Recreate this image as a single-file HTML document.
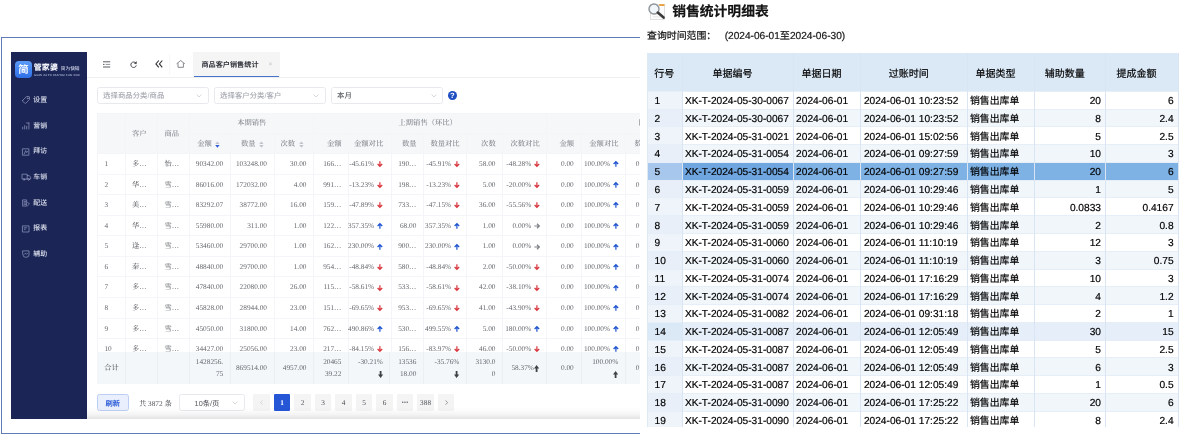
<!DOCTYPE html>
<html lang="zh-CN"><head><meta charset="utf-8"><title>销售统计明细表</title>
<style>
html,body{margin:0;padding:0;background:#fff;}
body{width:1187px;height:438px;position:relative;overflow:hidden;font-family:"Liberation Sans","Noto Sans CJK SC",sans-serif;}
div{position:absolute;box-sizing:border-box;white-space:nowrap;}
svg{position:absolute;overflow:visible;}
#L{text-rendering:geometricPrecision;font-family:"Liberation Serif","Noto Serif CJK SC",serif;font-size:7.3px;font-weight:500;color:#65686e;}
.sans{font-family:"Liberation Sans","Noto Sans CJK SC",sans-serif;}
.hd{color:#8b8e94;font-weight:600;}
.menu{font-family:"Liberation Sans","Noto Sans CJK SC",sans-serif;font-weight:500;font-size:6.9px;color:#dde1ee;}
#R{-webkit-text-stroke:0.18px #000;text-rendering:geometricPrecision;font-family:"Liberation Sans","Noto Sans CJK SC",sans-serif;font-size:10.18px;color:#000;}
.vl{background:#f3f5f8;width:1px;}
.hl{background:#f3f5f8;height:1px;}
.rvl{background:#d9e5f2;width:1px;}
.rhl{background:#e6eef7;height:1px;}
</style></head><body>

<div style="left:11px;top:52px;width:76px;height:367px;background:#1b2556;"></div>
<div id="L" style="left:0;top:0;width:640px;height:438px;overflow:hidden;filter:blur(0.42px);">
<div style="left:1px;top:37px;width:645px;height:397px;border:1px solid #5f7cb6;border-right:none;"></div>
<div style="left:15px;top:61.4px;width:17px;height:17px;border-radius:4px;background:linear-gradient(180deg,#5b9bf8,#2f6fe6);"></div>
<div class="sans" style="left:15px;top:63.9px;width:17px;height:14px;line-height:14px;text-align:center;color:#f4f8ff;font-weight:bold;font-size:10.4px;">简</div>
<div class="sans" style="left:33.7px;top:61.9px;width:30px;height:12px;line-height:12px;text-align:left;color:#f2f4fa;font-weight:900;font-size:7.9px;letter-spacing:0.25px;">管家婆</div>
<div class="sans" style="left:60.8px;top:63.3px;width:24px;height:12px;line-height:12px;text-align:left;color:#d5daec;font-size:4.7px;font-weight:500;">简为快销</div>
<div class="sans" style="left:34px;top:73.9px;width:50px;height:4px;line-height:4px;text-align:left;color:#b9c0dc;font-size:2.75px;letter-spacing:0.05px;">GUAN JIA PO JIAN WEI KUAI XIAO</div>
<svg style="left:21.6px;top:96.3px" width="9" height="8" viewBox="0 0 9 8" fill="none" stroke="#959dc2" stroke-width="0.7" stroke-linecap="round" stroke-linejoin="round"><path d="M0.7 4.3 L4.2 0.8 Q4.5 0.5 5 0.5 H6.9 Q7.5 0.5 7.5 1.1 V3 Q7.5 3.5 7.2 3.8 L3.7 7.3 Q3.2 7.7 2.7 7.2 L0.7 5.2 Q0.3 4.7 0.7 4.3 Z"/><circle cx="5.7" cy="2.3" r="0.45"/></svg>
<div class="menu" style="left:33.3px;top:94.95px;width:30px;height:12px;line-height:12px;text-align:left;">设置</div>
<svg style="left:21.6px;top:121.97px" width="9" height="8" viewBox="0 0 9 8" fill="none" stroke="#959dc2" stroke-width="0.7" stroke-linecap="round" stroke-linejoin="round"><path d="M0.7 7 V5.2 M2.7 7 V3.6 M4.7 7 V4.4 M6.9 7 V1 M4.6 1 H6.9"/></svg>
<div class="menu" style="left:33.3px;top:120.62px;width:30px;height:12px;line-height:12px;text-align:left;">营销</div>
<svg style="left:21.6px;top:147.64px" width="9" height="8" viewBox="0 0 9 8" fill="none" stroke="#959dc2" stroke-width="0.7" stroke-linecap="round" stroke-linejoin="round"><path d="M0.8 0.8 H6.9 V7.2 H0.8 Z M2.2 5.9 L3.7 2.6 L4.7 4.6 L5.9 3.2"/></svg>
<div class="menu" style="left:33.3px;top:146.29px;width:30px;height:12px;line-height:12px;text-align:left;">拜访</div>
<svg style="left:21.6px;top:173.31px" width="9" height="8" viewBox="0 0 9 8" fill="none" stroke="#959dc2" stroke-width="0.7" stroke-linecap="round" stroke-linejoin="round"><path d="M0.4 1.2 H5.2 V6 H0.4 Z M5.2 2.6 H7.3 L8.6 4.2 V6 H5.2"/><circle cx="2.1" cy="6.5" r="0.75" fill="#1b2556"/><circle cx="6.6" cy="6.5" r="0.75" fill="#1b2556"/></svg>
<div class="menu" style="left:33.3px;top:171.96px;width:30px;height:12px;line-height:12px;text-align:left;">车销</div>
<svg style="left:21.6px;top:198.98px" width="9" height="8" viewBox="0 0 9 8" fill="none" stroke="#959dc2" stroke-width="0.7" stroke-linecap="round" stroke-linejoin="round"><path d="M1 0.9 H4.6 V7.1 H1 Z M2 2.6 H3.6 M2 4 H3.6 M2 5.4 H3.6 M5.6 3.2 L7.4 5 L5.6 6.8"/></svg>
<div class="menu" style="left:33.3px;top:197.63px;width:30px;height:12px;line-height:12px;text-align:left;">配送</div>
<svg style="left:21.6px;top:224.65px" width="9" height="8" viewBox="0 0 9 8" fill="none" stroke="#959dc2" stroke-width="0.7" stroke-linecap="round" stroke-linejoin="round"><path d="M0.8 0.9 H7 V7 H0.8 Z M2.2 2.8 H4.6 M2.2 4.3 H3.4"/></svg>
<div class="menu" style="left:33.3px;top:223.3px;width:30px;height:12px;line-height:12px;text-align:left;">报表</div>
<svg style="left:21.6px;top:250.32px" width="9" height="8" viewBox="0 0 9 8" fill="none" stroke="#959dc2" stroke-width="0.7" stroke-linecap="round" stroke-linejoin="round"><path d="M0.9 0.9 H7 V5 Q7 7.3 3.95 7.3 Q0.9 7.3 0.9 5 Z M2.3 4.3 L3.4 3.2 L4.5 4.3 L5.6 3.2"/></svg>
<div class="menu" style="left:33.3px;top:248.97px;width:30px;height:12px;line-height:12px;text-align:left;">辅助</div>
<div style="left:87px;top:52px;width:553px;height:26px;background:#fff;border-bottom:1px solid #efefef;"></div>
<svg style="left:102.6px;top:60.5px" width="8" height="7" viewBox="0 0 8 7" fill="none" stroke="#3c3f45" stroke-width="0.85"><path d="M0 0.8 H7.2 M0 6 H7.2 M0 3.4 H1.5"/><path d="M2.6 3.4 H7.2" stroke="#7c7f85"/></svg>
<svg style="left:130.2px;top:60.8px" width="8" height="8" viewBox="0 0 8 8" fill="none" stroke="#33363b" stroke-width="0.9"><path d="M5.9 2.2 A2.75 2.75 0 1 0 6.3 4.4"/><path d="M6.5 0.5 V2.7 H4.3 Z" fill="#33363b" stroke-width="0.3"/></svg>
<svg style="left:155px;top:60px" width="8" height="8" viewBox="0 0 8 8" fill="none" stroke="#2f3237" stroke-width="1.1"><path d="M3.8 0.5 L0.9 3.9 L3.8 7.3 M7.3 0.5 L4.4 3.9 L7.3 7.3"/></svg>
<div style="left:169px;top:54px;width:1px;height:21px;background:#f7f7f7;"></div>
<svg style="left:176.4px;top:59.9px" width="10" height="8" viewBox="0 0 10 8" fill="none" stroke="#55585e" stroke-width="0.7" stroke-linejoin="round"><path d="M0.6 3.8 L4.7 0.5 L8.8 3.8 M2 3.2 V7.3 H7.4 V3.2"/></svg>
<div style="left:193.2px;top:52px;width:86.5px;height:25px;background:#f5f5f6;"></div>
<div style="left:193.6px;top:75.5px;width:85.8px;height:1.4px;background:#4673cd;"></div>
<div class="sans" style="left:201.4px;top:59.1px;width:70px;height:12px;line-height:12px;text-align:left;color:#2f3238;font-weight:bold;font-size:7.15px;">商品客户销售统计</div>
<div class="sans" style="left:268.6px;top:59.2px;width:6px;height:12px;line-height:12px;text-align:left;color:#c2c5cb;font-size:6.6px;">×</div>
<div style="left:97.3px;top:87.3px;width:111.3px;height:16.5px;border:1px solid #e7e9ed;border-radius:2.5px;background:#fff;"></div>
<div class="sans" style="left:103.1px;top:90.45px;width:111.3px;height:12px;line-height:12px;text-align:left;color:#a6a9b0;font-size:7.4px;">选择商品分类/商品</div>
<svg style="left:196.2px;top:94.15px" width="6" height="4" viewBox="0 0 6 4" fill="none" stroke="#c3c6cd" stroke-width="0.7"><path d="M0.6 0.5 L3 3 L5.4 0.5"/></svg>
<div style="left:214.3px;top:87.3px;width:111.3px;height:16.5px;border:1px solid #e7e9ed;border-radius:2.5px;background:#fff;"></div>
<div class="sans" style="left:220.1px;top:90.45px;width:111.3px;height:12px;line-height:12px;text-align:left;color:#a6a9b0;font-size:7.4px;">选择客户分类/客户</div>
<svg style="left:313.2px;top:94.15px" width="6" height="4" viewBox="0 0 6 4" fill="none" stroke="#c3c6cd" stroke-width="0.7"><path d="M0.6 0.5 L3 3 L5.4 0.5"/></svg>
<div style="left:331.2px;top:87.3px;width:112.2px;height:16.5px;border:1px solid #e7e9ed;border-radius:2.5px;background:#fff;"></div>
<div class="sans" style="left:337px;top:90.45px;width:112.2px;height:12px;line-height:12px;text-align:left;color:#5a5d63;font-size:7.4px;">本月</div>
<svg style="left:431px;top:94.15px" width="6" height="4" viewBox="0 0 6 4" fill="none" stroke="#c3c6cd" stroke-width="0.7"><path d="M0.6 0.5 L3 3 L5.4 0.5"/></svg>
<div style="left:447.7px;top:90.8px;width:9.2px;height:9.2px;border-radius:50%;background:#1f4dc2;"></div>
<div class="sans" style="left:447.7px;top:90.1px;width:9.2px;height:12px;line-height:12px;text-align:center;color:#fff;font-weight:bold;font-size:7.6px;">?</div>
<div style="left:97.2px;top:112.7px;width:560px;height:40.9px;background:#f5f7f9;"></div>
<div class="hl" style="left:97.2px;top:173.65px;width:560px;height:1px;"></div>
<div class="hl" style="left:97.2px;top:194.2px;width:560px;height:1px;"></div>
<div class="hl" style="left:97.2px;top:214.75px;width:560px;height:1px;"></div>
<div class="hl" style="left:97.2px;top:235.3px;width:560px;height:1px;"></div>
<div class="hl" style="left:97.2px;top:255.85px;width:560px;height:1px;"></div>
<div class="hl" style="left:97.2px;top:276.4px;width:560px;height:1px;"></div>
<div class="hl" style="left:97.2px;top:296.95px;width:560px;height:1px;"></div>
<div class="hl" style="left:97.2px;top:317.5px;width:560px;height:1px;"></div>
<div class="hl" style="left:97.2px;top:338.05px;width:560px;height:1px;"></div>
<div class="hl" style="left:97.2px;top:112.7px;width:560px;height:1px;"></div>
<div class="hl" style="left:97.2px;top:153.1px;width:560px;height:1px;"></div>
<div class="hl" style="left:189.8px;top:132.8px;width:500px;height:1px;"></div>
<div class="vl" style="left:96.7px;top:112.7px;width:1px;height:239.5px;"></div>
<div class="vl" style="left:124.6px;top:112.7px;width:1px;height:239.5px;"></div>
<div class="vl" style="left:157.1px;top:112.7px;width:1px;height:239.5px;"></div>
<div class="vl" style="left:189.3px;top:112.7px;width:1px;height:239.5px;"></div>
<div class="vl" style="left:229.9px;top:133.3px;width:1px;height:218.9px;"></div>
<div class="vl" style="left:273.7px;top:133.3px;width:1px;height:218.9px;"></div>
<div class="vl" style="left:313.2px;top:112.7px;width:1px;height:239.5px;"></div>
<div class="vl" style="left:348.1px;top:133.3px;width:1px;height:218.9px;"></div>
<div class="vl" style="left:390.5px;top:133.3px;width:1px;height:218.9px;"></div>
<div class="vl" style="left:423.1px;top:133.3px;width:1px;height:218.9px;"></div>
<div class="vl" style="left:466.1px;top:133.3px;width:1px;height:218.9px;"></div>
<div class="vl" style="left:502.2px;top:133.3px;width:1px;height:218.9px;"></div>
<div class="vl" style="left:546.2px;top:112.7px;width:1px;height:239.5px;"></div>
<div class="vl" style="left:580.5px;top:133.3px;width:1px;height:218.9px;"></div>
<div class="vl" style="left:625px;top:133.3px;width:1px;height:218.9px;"></div>
<div class="hd" style="left:132px;top:127.85px;width:30px;height:12px;line-height:12px;text-align:left;">客户</div>
<div class="hd" style="left:164.5px;top:127.85px;width:30px;height:12px;line-height:12px;text-align:left;">商品</div>
<div class="hd" style="left:189.8px;top:117px;width:123.9px;height:12px;line-height:12px;text-align:center;">本期销售</div>
<div class="hd" style="left:313.7px;top:117px;width:233px;height:12px;line-height:12px;text-align:center;text-indent:-5px;">上期销售（环比）</div>
<div class="hd" style="left:638.6px;top:117px;width:40px;height:12px;line-height:12px;text-align:left;">同期销售（同比）</div>
<div class="hd" style="left:189.8px;top:138.05px;width:22px;height:12px;line-height:12px;text-align:right;">金额</div>
<svg style="left:215.4px;top:141.05px" width="4.8" height="7" viewBox="0 0 4.8 7"><path d="M2.4 0.4 L4.6 3 H0.2 Z" fill="#c0c4cc"/><path d="M2.4 6.8 L4.6 4.1 H0.2 Z" fill="#2b5bd7"/></svg>
<div class="hd" style="left:230.4px;top:138.05px;width:25.2px;height:12px;line-height:12px;text-align:right;">数量</div>
<svg style="left:259.2px;top:141.05px" width="4.8" height="7" viewBox="0 0 4.8 7"><path d="M2.4 0.4 L4.6 3 H0.2 Z" fill="#c0c4cc"/><path d="M2.4 6.8 L4.6 4.1 H0.2 Z" fill="#c0c4cc"/></svg>
<div class="hd" style="left:274.2px;top:138.05px;width:20.9px;height:12px;line-height:12px;text-align:right;">次数</div>
<svg style="left:298.7px;top:141.05px" width="4.8" height="7" viewBox="0 0 4.8 7"><path d="M2.4 0.4 L4.6 3 H0.2 Z" fill="#c0c4cc"/><path d="M2.4 6.8 L4.6 4.1 H0.2 Z" fill="#c0c4cc"/></svg>
<div class="hd" style="left:313.7px;top:138.05px;width:27.9px;height:12px;line-height:12px;text-align:right;">金额</div>
<div class="hd" style="left:348.6px;top:138.05px;width:34.6px;height:12px;line-height:12px;text-align:right;">金额对比</div>
<div class="hd" style="left:391px;top:138.05px;width:25.6px;height:12px;line-height:12px;text-align:right;">数量</div>
<div class="hd" style="left:423.6px;top:138.05px;width:36px;height:12px;line-height:12px;text-align:right;">数量对比</div>
<div class="hd" style="left:466.6px;top:138.05px;width:29.1px;height:12px;line-height:12px;text-align:right;">次数</div>
<div class="hd" style="left:502.7px;top:138.05px;width:37px;height:12px;line-height:12px;text-align:right;">次数对比</div>
<div class="hd" style="left:546.7px;top:138.05px;width:27.3px;height:12px;line-height:12px;text-align:right;">金额</div>
<div class="hd" style="left:581px;top:138.05px;width:37.5px;height:12px;line-height:12px;text-align:right;">金额对比</div>
<div class="hd" style="left:634.6px;top:138.05px;width:30px;height:12px;line-height:12px;text-align:left;">数量</div>
<div style="left:0;top:153.6px;width:640px;height:198.6px;overflow:hidden;">
<div style="left:104.4px;top:4.58px;width:20px;height:12px;line-height:12px;text-align:left;">1</div>
<div style="left:132px;top:4.58px;width:30px;height:12px;line-height:12px;text-align:left;">多…</div>
<div style="left:164.5px;top:4.58px;width:30px;height:12px;line-height:12px;text-align:left;">怡…</div>
<div style="left:189.8px;top:4.58px;width:33.4px;height:12px;line-height:12px;text-align:right;">90342.00</div>
<div style="left:230.4px;top:4.58px;width:36.6px;height:12px;line-height:12px;text-align:right;">103248.00</div>
<div style="left:274.2px;top:4.58px;width:32.3px;height:12px;line-height:12px;text-align:right;">30.00</div>
<div style="left:313.7px;top:4.58px;width:27.7px;height:12px;line-height:12px;text-align:right;">166…</div>
<svg style="left:376.6px;top:7.78px" width="5.8" height="6" viewBox="0 0 5.8 6" fill="none" stroke="#d9363e" stroke-width="1.25"><path d="M2.9 0.3 V5.2 M0.6 3 L2.9 5.3 L5.2 3"/></svg>
<div style="left:338.6px;top:4.58px;width:35.6px;height:12px;line-height:12px;text-align:right;">-45.61%</div>
<div style="left:391px;top:4.58px;width:25.4px;height:12px;line-height:12px;text-align:right;">190…</div>
<svg style="left:453.6px;top:7.78px" width="5.8" height="6" viewBox="0 0 5.8 6" fill="none" stroke="#d9363e" stroke-width="1.25"><path d="M2.9 0.3 V5.2 M0.6 3 L2.9 5.3 L5.2 3"/></svg>
<div style="left:413.6px;top:4.58px;width:37.6px;height:12px;line-height:12px;text-align:right;">-45.91%</div>
<div style="left:466.6px;top:4.58px;width:28.9px;height:12px;line-height:12px;text-align:right;">58.00</div>
<svg style="left:533.7px;top:7.78px" width="5.8" height="6" viewBox="0 0 5.8 6" fill="none" stroke="#d9363e" stroke-width="1.25"><path d="M2.9 0.3 V5.2 M0.6 3 L2.9 5.3 L5.2 3"/></svg>
<div style="left:492.7px;top:4.58px;width:38.6px;height:12px;line-height:12px;text-align:right;">-48.28%</div>
<div style="left:546.7px;top:4.58px;width:27.1px;height:12px;line-height:12px;text-align:right;">0.00</div>
<svg style="left:612.5px;top:7.78px" width="5.8" height="6" viewBox="0 0 5.8 6" fill="none" stroke="#1f55d0" stroke-width="1.25"><path d="M2.9 5.7 V0.8 M0.6 3 L2.9 0.7 L5.2 3"/></svg>
<div style="left:571px;top:4.58px;width:39.1px;height:12px;line-height:12px;text-align:right;">100.00%</div>
<div style="left:635.8px;top:4.58px;width:10px;height:12px;line-height:12px;text-align:left;">0</div>
<div style="left:104.4px;top:25.13px;width:20px;height:12px;line-height:12px;text-align:left;">2</div>
<div style="left:132px;top:25.13px;width:30px;height:12px;line-height:12px;text-align:left;">华…</div>
<div style="left:164.5px;top:25.13px;width:30px;height:12px;line-height:12px;text-align:left;">雪…</div>
<div style="left:189.8px;top:25.13px;width:33.4px;height:12px;line-height:12px;text-align:right;">86016.00</div>
<div style="left:230.4px;top:25.13px;width:36.6px;height:12px;line-height:12px;text-align:right;">172032.00</div>
<div style="left:274.2px;top:25.13px;width:32.3px;height:12px;line-height:12px;text-align:right;">4.00</div>
<div style="left:313.7px;top:25.13px;width:27.7px;height:12px;line-height:12px;text-align:right;">991…</div>
<svg style="left:376.6px;top:28.33px" width="5.8" height="6" viewBox="0 0 5.8 6" fill="none" stroke="#d9363e" stroke-width="1.25"><path d="M2.9 0.3 V5.2 M0.6 3 L2.9 5.3 L5.2 3"/></svg>
<div style="left:338.6px;top:25.13px;width:35.6px;height:12px;line-height:12px;text-align:right;">-13.23%</div>
<div style="left:391px;top:25.13px;width:25.4px;height:12px;line-height:12px;text-align:right;">198…</div>
<svg style="left:453.6px;top:28.33px" width="5.8" height="6" viewBox="0 0 5.8 6" fill="none" stroke="#d9363e" stroke-width="1.25"><path d="M2.9 0.3 V5.2 M0.6 3 L2.9 5.3 L5.2 3"/></svg>
<div style="left:413.6px;top:25.13px;width:37.6px;height:12px;line-height:12px;text-align:right;">-13.23%</div>
<div style="left:466.6px;top:25.13px;width:28.9px;height:12px;line-height:12px;text-align:right;">5.00</div>
<svg style="left:533.7px;top:28.33px" width="5.8" height="6" viewBox="0 0 5.8 6" fill="none" stroke="#d9363e" stroke-width="1.25"><path d="M2.9 0.3 V5.2 M0.6 3 L2.9 5.3 L5.2 3"/></svg>
<div style="left:492.7px;top:25.13px;width:38.6px;height:12px;line-height:12px;text-align:right;">-20.00%</div>
<div style="left:546.7px;top:25.13px;width:27.1px;height:12px;line-height:12px;text-align:right;">0.00</div>
<svg style="left:612.5px;top:28.33px" width="5.8" height="6" viewBox="0 0 5.8 6" fill="none" stroke="#1f55d0" stroke-width="1.25"><path d="M2.9 5.7 V0.8 M0.6 3 L2.9 0.7 L5.2 3"/></svg>
<div style="left:571px;top:25.13px;width:39.1px;height:12px;line-height:12px;text-align:right;">100.00%</div>
<div style="left:635.8px;top:25.13px;width:10px;height:12px;line-height:12px;text-align:left;">0</div>
<div style="left:104.4px;top:45.67px;width:20px;height:12px;line-height:12px;text-align:left;">3</div>
<div style="left:132px;top:45.67px;width:30px;height:12px;line-height:12px;text-align:left;">美…</div>
<div style="left:164.5px;top:45.67px;width:30px;height:12px;line-height:12px;text-align:left;">雪…</div>
<div style="left:189.8px;top:45.67px;width:33.4px;height:12px;line-height:12px;text-align:right;">83292.07</div>
<div style="left:230.4px;top:45.67px;width:36.6px;height:12px;line-height:12px;text-align:right;">38772.00</div>
<div style="left:274.2px;top:45.67px;width:32.3px;height:12px;line-height:12px;text-align:right;">16.00</div>
<div style="left:313.7px;top:45.67px;width:27.7px;height:12px;line-height:12px;text-align:right;">159…</div>
<svg style="left:376.6px;top:48.88px" width="5.8" height="6" viewBox="0 0 5.8 6" fill="none" stroke="#d9363e" stroke-width="1.25"><path d="M2.9 0.3 V5.2 M0.6 3 L2.9 5.3 L5.2 3"/></svg>
<div style="left:338.6px;top:45.67px;width:35.6px;height:12px;line-height:12px;text-align:right;">-47.89%</div>
<div style="left:391px;top:45.67px;width:25.4px;height:12px;line-height:12px;text-align:right;">733…</div>
<svg style="left:453.6px;top:48.88px" width="5.8" height="6" viewBox="0 0 5.8 6" fill="none" stroke="#d9363e" stroke-width="1.25"><path d="M2.9 0.3 V5.2 M0.6 3 L2.9 5.3 L5.2 3"/></svg>
<div style="left:413.6px;top:45.67px;width:37.6px;height:12px;line-height:12px;text-align:right;">-47.15%</div>
<div style="left:466.6px;top:45.67px;width:28.9px;height:12px;line-height:12px;text-align:right;">36.00</div>
<svg style="left:533.7px;top:48.88px" width="5.8" height="6" viewBox="0 0 5.8 6" fill="none" stroke="#d9363e" stroke-width="1.25"><path d="M2.9 0.3 V5.2 M0.6 3 L2.9 5.3 L5.2 3"/></svg>
<div style="left:492.7px;top:45.67px;width:38.6px;height:12px;line-height:12px;text-align:right;">-55.56%</div>
<div style="left:546.7px;top:45.67px;width:27.1px;height:12px;line-height:12px;text-align:right;">0.00</div>
<svg style="left:612.5px;top:48.88px" width="5.8" height="6" viewBox="0 0 5.8 6" fill="none" stroke="#1f55d0" stroke-width="1.25"><path d="M2.9 5.7 V0.8 M0.6 3 L2.9 0.7 L5.2 3"/></svg>
<div style="left:571px;top:45.67px;width:39.1px;height:12px;line-height:12px;text-align:right;">100.00%</div>
<div style="left:635.8px;top:45.67px;width:10px;height:12px;line-height:12px;text-align:left;">0</div>
<div style="left:104.4px;top:66.23px;width:20px;height:12px;line-height:12px;text-align:left;">4</div>
<div style="left:132px;top:66.23px;width:30px;height:12px;line-height:12px;text-align:left;">华…</div>
<div style="left:164.5px;top:66.23px;width:30px;height:12px;line-height:12px;text-align:left;">雪…</div>
<div style="left:189.8px;top:66.23px;width:33.4px;height:12px;line-height:12px;text-align:right;">55980.00</div>
<div style="left:230.4px;top:66.23px;width:36.6px;height:12px;line-height:12px;text-align:right;">311.00</div>
<div style="left:274.2px;top:66.23px;width:32.3px;height:12px;line-height:12px;text-align:right;">1.00</div>
<div style="left:313.7px;top:66.23px;width:27.7px;height:12px;line-height:12px;text-align:right;">122…</div>
<svg style="left:376.6px;top:69.43px" width="5.8" height="6" viewBox="0 0 5.8 6" fill="none" stroke="#1f55d0" stroke-width="1.25"><path d="M2.9 5.7 V0.8 M0.6 3 L2.9 0.7 L5.2 3"/></svg>
<div style="left:338.6px;top:66.23px;width:35.6px;height:12px;line-height:12px;text-align:right;">357.35%</div>
<div style="left:391px;top:66.23px;width:25.4px;height:12px;line-height:12px;text-align:right;">68.00</div>
<svg style="left:453.6px;top:69.43px" width="5.8" height="6" viewBox="0 0 5.8 6" fill="none" stroke="#1f55d0" stroke-width="1.25"><path d="M2.9 5.7 V0.8 M0.6 3 L2.9 0.7 L5.2 3"/></svg>
<div style="left:413.6px;top:66.23px;width:37.6px;height:12px;line-height:12px;text-align:right;">357.35%</div>
<div style="left:466.6px;top:66.23px;width:28.9px;height:12px;line-height:12px;text-align:right;">1.00</div>
<svg style="left:533.7px;top:69.43px" width="5.8" height="6" viewBox="0 0 5.8 6" fill="none" stroke="#7d8087" stroke-width="1.25"><path d="M0.4 3 H5.2 M3 0.8 L5.3 3 L3 5.2"/></svg>
<div style="left:492.7px;top:66.23px;width:38.6px;height:12px;line-height:12px;text-align:right;">0.00%</div>
<div style="left:546.7px;top:66.23px;width:27.1px;height:12px;line-height:12px;text-align:right;">0.00</div>
<svg style="left:612.5px;top:69.43px" width="5.8" height="6" viewBox="0 0 5.8 6" fill="none" stroke="#1f55d0" stroke-width="1.25"><path d="M2.9 5.7 V0.8 M0.6 3 L2.9 0.7 L5.2 3"/></svg>
<div style="left:571px;top:66.23px;width:39.1px;height:12px;line-height:12px;text-align:right;">100.00%</div>
<div style="left:635.8px;top:66.23px;width:10px;height:12px;line-height:12px;text-align:left;">0</div>
<div style="left:104.4px;top:86.78px;width:20px;height:12px;line-height:12px;text-align:left;">5</div>
<div style="left:132px;top:86.78px;width:30px;height:12px;line-height:12px;text-align:left;">逢…</div>
<div style="left:164.5px;top:86.78px;width:30px;height:12px;line-height:12px;text-align:left;">雪…</div>
<div style="left:189.8px;top:86.78px;width:33.4px;height:12px;line-height:12px;text-align:right;">53460.00</div>
<div style="left:230.4px;top:86.78px;width:36.6px;height:12px;line-height:12px;text-align:right;">29700.00</div>
<div style="left:274.2px;top:86.78px;width:32.3px;height:12px;line-height:12px;text-align:right;">1.00</div>
<div style="left:313.7px;top:86.78px;width:27.7px;height:12px;line-height:12px;text-align:right;">162…</div>
<svg style="left:376.6px;top:89.98px" width="5.8" height="6" viewBox="0 0 5.8 6" fill="none" stroke="#1f55d0" stroke-width="1.25"><path d="M2.9 5.7 V0.8 M0.6 3 L2.9 0.7 L5.2 3"/></svg>
<div style="left:338.6px;top:86.78px;width:35.6px;height:12px;line-height:12px;text-align:right;">230.00%</div>
<div style="left:391px;top:86.78px;width:25.4px;height:12px;line-height:12px;text-align:right;">900…</div>
<svg style="left:453.6px;top:89.98px" width="5.8" height="6" viewBox="0 0 5.8 6" fill="none" stroke="#1f55d0" stroke-width="1.25"><path d="M2.9 5.7 V0.8 M0.6 3 L2.9 0.7 L5.2 3"/></svg>
<div style="left:413.6px;top:86.78px;width:37.6px;height:12px;line-height:12px;text-align:right;">230.00%</div>
<div style="left:466.6px;top:86.78px;width:28.9px;height:12px;line-height:12px;text-align:right;">1.00</div>
<svg style="left:533.7px;top:89.98px" width="5.8" height="6" viewBox="0 0 5.8 6" fill="none" stroke="#7d8087" stroke-width="1.25"><path d="M0.4 3 H5.2 M3 0.8 L5.3 3 L3 5.2"/></svg>
<div style="left:492.7px;top:86.78px;width:38.6px;height:12px;line-height:12px;text-align:right;">0.00%</div>
<div style="left:546.7px;top:86.78px;width:27.1px;height:12px;line-height:12px;text-align:right;">0.00</div>
<svg style="left:612.5px;top:89.98px" width="5.8" height="6" viewBox="0 0 5.8 6" fill="none" stroke="#1f55d0" stroke-width="1.25"><path d="M2.9 5.7 V0.8 M0.6 3 L2.9 0.7 L5.2 3"/></svg>
<div style="left:571px;top:86.78px;width:39.1px;height:12px;line-height:12px;text-align:right;">100.00%</div>
<div style="left:635.8px;top:86.78px;width:10px;height:12px;line-height:12px;text-align:left;">0</div>
<div style="left:104.4px;top:107.33px;width:20px;height:12px;line-height:12px;text-align:left;">6</div>
<div style="left:132px;top:107.33px;width:30px;height:12px;line-height:12px;text-align:left;">秦…</div>
<div style="left:164.5px;top:107.33px;width:30px;height:12px;line-height:12px;text-align:left;">雪…</div>
<div style="left:189.8px;top:107.33px;width:33.4px;height:12px;line-height:12px;text-align:right;">48840.00</div>
<div style="left:230.4px;top:107.33px;width:36.6px;height:12px;line-height:12px;text-align:right;">29700.00</div>
<div style="left:274.2px;top:107.33px;width:32.3px;height:12px;line-height:12px;text-align:right;">1.00</div>
<div style="left:313.7px;top:107.33px;width:27.7px;height:12px;line-height:12px;text-align:right;">954…</div>
<svg style="left:376.6px;top:110.53px" width="5.8" height="6" viewBox="0 0 5.8 6" fill="none" stroke="#d9363e" stroke-width="1.25"><path d="M2.9 0.3 V5.2 M0.6 3 L2.9 5.3 L5.2 3"/></svg>
<div style="left:338.6px;top:107.33px;width:35.6px;height:12px;line-height:12px;text-align:right;">-48.84%</div>
<div style="left:391px;top:107.33px;width:25.4px;height:12px;line-height:12px;text-align:right;">580…</div>
<svg style="left:453.6px;top:110.53px" width="5.8" height="6" viewBox="0 0 5.8 6" fill="none" stroke="#d9363e" stroke-width="1.25"><path d="M2.9 0.3 V5.2 M0.6 3 L2.9 5.3 L5.2 3"/></svg>
<div style="left:413.6px;top:107.33px;width:37.6px;height:12px;line-height:12px;text-align:right;">-48.84%</div>
<div style="left:466.6px;top:107.33px;width:28.9px;height:12px;line-height:12px;text-align:right;">2.00</div>
<svg style="left:533.7px;top:110.53px" width="5.8" height="6" viewBox="0 0 5.8 6" fill="none" stroke="#d9363e" stroke-width="1.25"><path d="M2.9 0.3 V5.2 M0.6 3 L2.9 5.3 L5.2 3"/></svg>
<div style="left:492.7px;top:107.33px;width:38.6px;height:12px;line-height:12px;text-align:right;">-50.00%</div>
<div style="left:546.7px;top:107.33px;width:27.1px;height:12px;line-height:12px;text-align:right;">0.00</div>
<svg style="left:612.5px;top:110.53px" width="5.8" height="6" viewBox="0 0 5.8 6" fill="none" stroke="#1f55d0" stroke-width="1.25"><path d="M2.9 5.7 V0.8 M0.6 3 L2.9 0.7 L5.2 3"/></svg>
<div style="left:571px;top:107.33px;width:39.1px;height:12px;line-height:12px;text-align:right;">100.00%</div>
<div style="left:635.8px;top:107.33px;width:10px;height:12px;line-height:12px;text-align:left;">0</div>
<div style="left:104.4px;top:127.88px;width:20px;height:12px;line-height:12px;text-align:left;">7</div>
<div style="left:132px;top:127.88px;width:30px;height:12px;line-height:12px;text-align:left;">多…</div>
<div style="left:164.5px;top:127.88px;width:30px;height:12px;line-height:12px;text-align:left;">雪…</div>
<div style="left:189.8px;top:127.88px;width:33.4px;height:12px;line-height:12px;text-align:right;">47840.00</div>
<div style="left:230.4px;top:127.88px;width:36.6px;height:12px;line-height:12px;text-align:right;">22080.00</div>
<div style="left:274.2px;top:127.88px;width:32.3px;height:12px;line-height:12px;text-align:right;">26.00</div>
<div style="left:313.7px;top:127.88px;width:27.7px;height:12px;line-height:12px;text-align:right;">115…</div>
<svg style="left:376.6px;top:131.08px" width="5.8" height="6" viewBox="0 0 5.8 6" fill="none" stroke="#d9363e" stroke-width="1.25"><path d="M2.9 0.3 V5.2 M0.6 3 L2.9 5.3 L5.2 3"/></svg>
<div style="left:338.6px;top:127.88px;width:35.6px;height:12px;line-height:12px;text-align:right;">-58.61%</div>
<div style="left:391px;top:127.88px;width:25.4px;height:12px;line-height:12px;text-align:right;">533…</div>
<svg style="left:453.6px;top:131.08px" width="5.8" height="6" viewBox="0 0 5.8 6" fill="none" stroke="#d9363e" stroke-width="1.25"><path d="M2.9 0.3 V5.2 M0.6 3 L2.9 5.3 L5.2 3"/></svg>
<div style="left:413.6px;top:127.88px;width:37.6px;height:12px;line-height:12px;text-align:right;">-58.61%</div>
<div style="left:466.6px;top:127.88px;width:28.9px;height:12px;line-height:12px;text-align:right;">42.00</div>
<svg style="left:533.7px;top:131.08px" width="5.8" height="6" viewBox="0 0 5.8 6" fill="none" stroke="#d9363e" stroke-width="1.25"><path d="M2.9 0.3 V5.2 M0.6 3 L2.9 5.3 L5.2 3"/></svg>
<div style="left:492.7px;top:127.88px;width:38.6px;height:12px;line-height:12px;text-align:right;">-38.10%</div>
<div style="left:546.7px;top:127.88px;width:27.1px;height:12px;line-height:12px;text-align:right;">0.00</div>
<svg style="left:612.5px;top:131.08px" width="5.8" height="6" viewBox="0 0 5.8 6" fill="none" stroke="#1f55d0" stroke-width="1.25"><path d="M2.9 5.7 V0.8 M0.6 3 L2.9 0.7 L5.2 3"/></svg>
<div style="left:571px;top:127.88px;width:39.1px;height:12px;line-height:12px;text-align:right;">100.00%</div>
<div style="left:635.8px;top:127.88px;width:10px;height:12px;line-height:12px;text-align:left;">0</div>
<div style="left:104.4px;top:148.43px;width:20px;height:12px;line-height:12px;text-align:left;">8</div>
<div style="left:132px;top:148.43px;width:30px;height:12px;line-height:12px;text-align:left;">多…</div>
<div style="left:164.5px;top:148.43px;width:30px;height:12px;line-height:12px;text-align:left;">雪…</div>
<div style="left:189.8px;top:148.43px;width:33.4px;height:12px;line-height:12px;text-align:right;">45828.00</div>
<div style="left:230.4px;top:148.43px;width:36.6px;height:12px;line-height:12px;text-align:right;">28944.00</div>
<div style="left:274.2px;top:148.43px;width:32.3px;height:12px;line-height:12px;text-align:right;">23.00</div>
<div style="left:313.7px;top:148.43px;width:27.7px;height:12px;line-height:12px;text-align:right;">151…</div>
<svg style="left:376.6px;top:151.62px" width="5.8" height="6" viewBox="0 0 5.8 6" fill="none" stroke="#d9363e" stroke-width="1.25"><path d="M2.9 0.3 V5.2 M0.6 3 L2.9 5.3 L5.2 3"/></svg>
<div style="left:338.6px;top:148.43px;width:35.6px;height:12px;line-height:12px;text-align:right;">-69.65%</div>
<div style="left:391px;top:148.43px;width:25.4px;height:12px;line-height:12px;text-align:right;">953…</div>
<svg style="left:453.6px;top:151.62px" width="5.8" height="6" viewBox="0 0 5.8 6" fill="none" stroke="#d9363e" stroke-width="1.25"><path d="M2.9 0.3 V5.2 M0.6 3 L2.9 5.3 L5.2 3"/></svg>
<div style="left:413.6px;top:148.43px;width:37.6px;height:12px;line-height:12px;text-align:right;">-69.65%</div>
<div style="left:466.6px;top:148.43px;width:28.9px;height:12px;line-height:12px;text-align:right;">41.00</div>
<svg style="left:533.7px;top:151.62px" width="5.8" height="6" viewBox="0 0 5.8 6" fill="none" stroke="#d9363e" stroke-width="1.25"><path d="M2.9 0.3 V5.2 M0.6 3 L2.9 5.3 L5.2 3"/></svg>
<div style="left:492.7px;top:148.43px;width:38.6px;height:12px;line-height:12px;text-align:right;">-43.90%</div>
<div style="left:546.7px;top:148.43px;width:27.1px;height:12px;line-height:12px;text-align:right;">0.00</div>
<svg style="left:612.5px;top:151.62px" width="5.8" height="6" viewBox="0 0 5.8 6" fill="none" stroke="#1f55d0" stroke-width="1.25"><path d="M2.9 5.7 V0.8 M0.6 3 L2.9 0.7 L5.2 3"/></svg>
<div style="left:571px;top:148.43px;width:39.1px;height:12px;line-height:12px;text-align:right;">100.00%</div>
<div style="left:635.8px;top:148.43px;width:10px;height:12px;line-height:12px;text-align:left;">0</div>
<div style="left:104.4px;top:168.98px;width:20px;height:12px;line-height:12px;text-align:left;">9</div>
<div style="left:132px;top:168.98px;width:30px;height:12px;line-height:12px;text-align:left;">多…</div>
<div style="left:164.5px;top:168.98px;width:30px;height:12px;line-height:12px;text-align:left;">雪…</div>
<div style="left:189.8px;top:168.98px;width:33.4px;height:12px;line-height:12px;text-align:right;">45050.00</div>
<div style="left:230.4px;top:168.98px;width:36.6px;height:12px;line-height:12px;text-align:right;">31800.00</div>
<div style="left:274.2px;top:168.98px;width:32.3px;height:12px;line-height:12px;text-align:right;">14.00</div>
<div style="left:313.7px;top:168.98px;width:27.7px;height:12px;line-height:12px;text-align:right;">762…</div>
<svg style="left:376.6px;top:172.18px" width="5.8" height="6" viewBox="0 0 5.8 6" fill="none" stroke="#1f55d0" stroke-width="1.25"><path d="M2.9 5.7 V0.8 M0.6 3 L2.9 0.7 L5.2 3"/></svg>
<div style="left:338.6px;top:168.98px;width:35.6px;height:12px;line-height:12px;text-align:right;">490.86%</div>
<div style="left:391px;top:168.98px;width:25.4px;height:12px;line-height:12px;text-align:right;">530…</div>
<svg style="left:453.6px;top:172.18px" width="5.8" height="6" viewBox="0 0 5.8 6" fill="none" stroke="#1f55d0" stroke-width="1.25"><path d="M2.9 5.7 V0.8 M0.6 3 L2.9 0.7 L5.2 3"/></svg>
<div style="left:413.6px;top:168.98px;width:37.6px;height:12px;line-height:12px;text-align:right;">499.55%</div>
<div style="left:466.6px;top:168.98px;width:28.9px;height:12px;line-height:12px;text-align:right;">5.00</div>
<svg style="left:533.7px;top:172.18px" width="5.8" height="6" viewBox="0 0 5.8 6" fill="none" stroke="#1f55d0" stroke-width="1.25"><path d="M2.9 5.7 V0.8 M0.6 3 L2.9 0.7 L5.2 3"/></svg>
<div style="left:492.7px;top:168.98px;width:38.6px;height:12px;line-height:12px;text-align:right;">180.00%</div>
<div style="left:546.7px;top:168.98px;width:27.1px;height:12px;line-height:12px;text-align:right;">0.00</div>
<svg style="left:612.5px;top:172.18px" width="5.8" height="6" viewBox="0 0 5.8 6" fill="none" stroke="#1f55d0" stroke-width="1.25"><path d="M2.9 5.7 V0.8 M0.6 3 L2.9 0.7 L5.2 3"/></svg>
<div style="left:571px;top:168.98px;width:39.1px;height:12px;line-height:12px;text-align:right;">100.00%</div>
<div style="left:635.8px;top:168.98px;width:10px;height:12px;line-height:12px;text-align:left;">0</div>
<div style="left:104.4px;top:189.53px;width:20px;height:12px;line-height:12px;text-align:left;">10</div>
<div style="left:132px;top:189.53px;width:30px;height:12px;line-height:12px;text-align:left;">多…</div>
<div style="left:164.5px;top:189.53px;width:30px;height:12px;line-height:12px;text-align:left;">雪…</div>
<div style="left:189.8px;top:189.53px;width:33.4px;height:12px;line-height:12px;text-align:right;">34427.00</div>
<div style="left:230.4px;top:189.53px;width:36.6px;height:12px;line-height:12px;text-align:right;">25056.00</div>
<div style="left:274.2px;top:189.53px;width:32.3px;height:12px;line-height:12px;text-align:right;">23.00</div>
<div style="left:313.7px;top:189.53px;width:27.7px;height:12px;line-height:12px;text-align:right;">217…</div>
<svg style="left:376.6px;top:192.73px" width="5.8" height="6" viewBox="0 0 5.8 6" fill="none" stroke="#d9363e" stroke-width="1.25"><path d="M2.9 0.3 V5.2 M0.6 3 L2.9 5.3 L5.2 3"/></svg>
<div style="left:338.6px;top:189.53px;width:35.6px;height:12px;line-height:12px;text-align:right;">-84.15%</div>
<div style="left:391px;top:189.53px;width:25.4px;height:12px;line-height:12px;text-align:right;">156…</div>
<svg style="left:453.6px;top:192.73px" width="5.8" height="6" viewBox="0 0 5.8 6" fill="none" stroke="#d9363e" stroke-width="1.25"><path d="M2.9 0.3 V5.2 M0.6 3 L2.9 5.3 L5.2 3"/></svg>
<div style="left:413.6px;top:189.53px;width:37.6px;height:12px;line-height:12px;text-align:right;">-83.97%</div>
<div style="left:466.6px;top:189.53px;width:28.9px;height:12px;line-height:12px;text-align:right;">46.00</div>
<svg style="left:533.7px;top:192.73px" width="5.8" height="6" viewBox="0 0 5.8 6" fill="none" stroke="#d9363e" stroke-width="1.25"><path d="M2.9 0.3 V5.2 M0.6 3 L2.9 5.3 L5.2 3"/></svg>
<div style="left:492.7px;top:189.53px;width:38.6px;height:12px;line-height:12px;text-align:right;">-50.00%</div>
<div style="left:546.7px;top:189.53px;width:27.1px;height:12px;line-height:12px;text-align:right;">0.00</div>
<svg style="left:612.5px;top:192.73px" width="5.8" height="6" viewBox="0 0 5.8 6" fill="none" stroke="#1f55d0" stroke-width="1.25"><path d="M2.9 5.7 V0.8 M0.6 3 L2.9 0.7 L5.2 3"/></svg>
<div style="left:571px;top:189.53px;width:39.1px;height:12px;line-height:12px;text-align:right;">100.00%</div>
<div style="left:635.8px;top:189.53px;width:10px;height:12px;line-height:12px;text-align:left;">0</div>
</div>
<div style="left:97.2px;top:352.2px;width:560px;height:31.7px;background:#f4f7fa;"></div>
<div style="left:124.6px;top:352.2px;width:1px;height:31.7px;background:#ebeef2;"></div>
<div style="left:157.1px;top:352.2px;width:1px;height:31.7px;background:#ebeef2;"></div>
<div style="left:189.3px;top:352.2px;width:1px;height:31.7px;background:#ebeef2;"></div>
<div style="left:229.9px;top:352.2px;width:1px;height:31.7px;background:#ebeef2;"></div>
<div style="left:273.7px;top:352.2px;width:1px;height:31.7px;background:#ebeef2;"></div>
<div style="left:313.2px;top:352.2px;width:1px;height:31.7px;background:#ebeef2;"></div>
<div style="left:348.1px;top:352.2px;width:1px;height:31.7px;background:#ebeef2;"></div>
<div style="left:389.3px;top:352.2px;width:1px;height:31.7px;background:#ebeef2;"></div>
<div style="left:423.1px;top:352.2px;width:1px;height:31.7px;background:#ebeef2;"></div>
<div style="left:466.1px;top:352.2px;width:1px;height:31.7px;background:#ebeef2;"></div>
<div style="left:502.2px;top:352.2px;width:1px;height:31.7px;background:#ebeef2;"></div>
<div style="left:546.2px;top:352.2px;width:1px;height:31.7px;background:#ebeef2;"></div>
<div style="left:580.5px;top:352.2px;width:1px;height:31.7px;background:#ebeef2;"></div>
<div style="left:625px;top:352.2px;width:1px;height:31.7px;background:#ebeef2;"></div>
<div style="left:104.2px;top:362.45px;width:30px;height:12px;line-height:12px;text-align:left;color:#54575d;">合计</div>
<div style="left:179.8px;top:356.05px;width:43.4px;height:12px;line-height:12px;text-align:right;">1428256.</div>
<div style="left:179.8px;top:368.25px;width:43.4px;height:12px;line-height:12px;text-align:right;">75</div>
<div style="left:220.4px;top:362.45px;width:46.6px;height:12px;line-height:12px;text-align:right;">869514.00</div>
<div style="left:264.2px;top:362.45px;width:42.3px;height:12px;line-height:12px;text-align:right;">4957.00</div>
<div style="left:303.7px;top:356.05px;width:37.7px;height:12px;line-height:12px;text-align:right;">20465</div>
<div style="left:303.7px;top:368.25px;width:37.7px;height:12px;line-height:12px;text-align:right;">39.22</div>
<div style="left:338.6px;top:356.05px;width:44.3px;height:12px;line-height:12px;text-align:right;">-30.21%</div>
<svg style="left:377.5px;top:370.95px" width="5.2" height="7" viewBox="0 0 5.2 7"><path d="M1.7 0 H3.5 V3.6 H5.2 L2.6 7 L0 3.6 H1.7 Z" fill="#3f4146"/></svg>
<div style="left:381px;top:356.05px;width:35.4px;height:12px;line-height:12px;text-align:right;">13536</div>
<div style="left:381px;top:368.25px;width:35.4px;height:12px;line-height:12px;text-align:right;">18.00</div>
<div style="left:413.6px;top:356.05px;width:45.8px;height:12px;line-height:12px;text-align:right;">-35.76%</div>
<svg style="left:454px;top:370.95px" width="5.2" height="7" viewBox="0 0 5.2 7"><path d="M1.7 0 H3.5 V3.6 H5.2 L2.6 7 L0 3.6 H1.7 Z" fill="#3f4146"/></svg>
<div style="left:456.6px;top:356.05px;width:38.9px;height:12px;line-height:12px;text-align:right;">3130.0</div>
<div style="left:456.6px;top:368.25px;width:38.9px;height:12px;line-height:12px;text-align:right;">0</div>
<div style="left:492.7px;top:362.45px;width:41.2px;height:12px;line-height:12px;text-align:right;">58.37%</div>
<svg style="left:534.2px;top:364.95px" width="5.2" height="7" viewBox="0 0 5.2 7"><path d="M1.7 7 H3.5 V3.4 H5.2 L2.6 0 L0 3.4 H1.7 Z" fill="#3f4146"/></svg>
<div style="left:536.7px;top:362.45px;width:37.1px;height:12px;line-height:12px;text-align:right;">0.00</div>
<div style="left:571px;top:356.05px;width:47.3px;height:12px;line-height:12px;text-align:right;">100.00%</div>
<svg style="left:612.9px;top:370.95px" width="5.2" height="7" viewBox="0 0 5.2 7"><path d="M1.7 7 H3.5 V3.4 H5.2 L2.6 0 L0 3.4 H1.7 Z" fill="#3f4146"/></svg>
<div style="left:635.8px;top:362.45px;width:10px;height:12px;line-height:12px;text-align:left;">0</div>
<div style="left:97.2px;top:394.2px;width:31.4px;height:16.6px;border:1px solid #bccef4;border-radius:2.5px;background:#e9effc;"></div>
<div class="sans" style="left:97.2px;top:397.9px;width:31.4px;height:12px;line-height:12px;text-align:center;color:#2a5bd7;font-weight:bold;font-size:7.3px;">刷新</div>
<div style="left:138.9px;top:397.7px;width:40px;height:12px;line-height:12px;text-align:left;color:#4d5056;">共 3872 条</div>
<div style="left:179.4px;top:394.2px;width:65.2px;height:16.6px;border:1px solid #e7e9ed;border-radius:2.5px;background:#fff;"></div>
<div class="sans" style="left:179.4px;top:397.9px;width:55.2px;height:12px;line-height:12px;text-align:center;color:#5a5d63;font-size:7.3px;">10条/页</div>
<svg style="left:232.2px;top:401.1px" width="6" height="4" viewBox="0 0 6 4" fill="none" stroke="#c3c6cd" stroke-width="0.7"><path d="M0.6 0.5 L3 3 L5.4 0.5"/></svg>
<div style="left:253.4px;top:394.2px;width:16.4px;height:16.6px;background:#f4f4f5;border-radius:1px;"></div>
<svg style="left:260px;top:400px" width="3.2" height="5.2" viewBox="0 0 3.2 5.2" fill="none" stroke="#c4c7cd" stroke-width="0.7"><path d="M2.6 0.5 L0.6 2.6 L2.6 4.7"/></svg>
<div style="left:273.9px;top:394.2px;width:16.4px;height:16.6px;background:#2456d6;border-radius:1px;"></div>
<div style="left:273.9px;top:396.7px;width:16.4px;height:12px;line-height:12px;text-align:center;color:#fff;font-weight:bold;">1</div>
<div style="left:294.4px;top:394.2px;width:16.4px;height:16.6px;background:#f4f4f5;border-radius:1px;"></div>
<div style="left:294.4px;top:396.7px;width:16.4px;height:12px;line-height:12px;text-align:center;color:#4d5056;">2</div>
<div style="left:314.9px;top:394.2px;width:16.4px;height:16.6px;background:#f4f4f5;border-radius:1px;"></div>
<div style="left:314.9px;top:396.7px;width:16.4px;height:12px;line-height:12px;text-align:center;color:#4d5056;">3</div>
<div style="left:335.4px;top:394.2px;width:16.4px;height:16.6px;background:#f4f4f5;border-radius:1px;"></div>
<div style="left:335.4px;top:396.7px;width:16.4px;height:12px;line-height:12px;text-align:center;color:#4d5056;">4</div>
<div style="left:355.9px;top:394.2px;width:16.4px;height:16.6px;background:#f4f4f5;border-radius:1px;"></div>
<div style="left:355.9px;top:396.7px;width:16.4px;height:12px;line-height:12px;text-align:center;color:#4d5056;">5</div>
<div style="left:376.4px;top:394.2px;width:16.4px;height:16.6px;background:#f4f4f5;border-radius:1px;"></div>
<div style="left:376.4px;top:396.7px;width:16.4px;height:12px;line-height:12px;text-align:center;color:#4d5056;">6</div>
<div style="left:396.9px;top:394.2px;width:16.4px;height:16.6px;background:#f4f4f5;border-radius:1px;"></div>
<div style="left:396.9px;top:396.7px;width:16.4px;height:12px;line-height:12px;text-align:center;color:#4d5056;letter-spacing:0.2px;font-size:5.6px;color:#3f4247;">•••</div>
<div style="left:417.4px;top:394.2px;width:16.4px;height:16.6px;background:#f4f4f5;border-radius:1px;"></div>
<div style="left:417.4px;top:396.7px;width:16.4px;height:12px;line-height:12px;text-align:center;color:#4d5056;">388</div>
<div style="left:437.9px;top:394.2px;width:16.4px;height:16.6px;background:#f4f4f5;border-radius:1px;"></div>
<svg style="left:444.5px;top:400px" width="3.2" height="5.2" viewBox="0 0 3.2 5.2" fill="none" stroke="#6a6d73" stroke-width="0.7"><path d="M0.6 0.5 L2.6 2.6 L0.6 4.7"/></svg>
<div style="left:87px;top:405.5px;width:553px;height:13.4px;background:linear-gradient(180deg,rgba(0,0,0,0) 0%,rgba(0,0,0,0.012) 35%,rgba(0,0,0,0.045) 65%,rgba(0,0,0,0.105) 100%);"></div>
</div>
<div id="R" style="left:641px;top:0;width:546px;height:438px;overflow:hidden;background:#fff;filter:blur(0.3px);">
<svg style="left:6px;top:2px" width="20" height="19" viewBox="0 0 20 19">
<rect x="3.5" y="2.5" width="14" height="15" fill="#fbfbfb" stroke="#d9d9d9" stroke-width="0.8"/>
<rect x="12.2" y="2.1" width="5.3" height="1.9" fill="#e8a341"/>
<path d="M6 12.5 H15 M6 14.8 H13" stroke="#e3e3e3" stroke-width="0.8"/>
<circle cx="7" cy="7" r="5" fill="#eef4f9" fill-opacity="0.85" stroke="#8e9499" stroke-width="1.4"/>
<path d="M10.8 10.6 L16.6 15.6" stroke="#3a3a3a" stroke-width="2.6" stroke-linecap="round"/>
</svg>
<div style="left:31.2px;top:2.9px;width:120px;height:18px;line-height:18px;text-align:left;font-weight:bold;font-size:13.8px;color:#141414;">销售统计明细表</div>
<div style="left:6px;top:30.4px;width:80px;height:14px;line-height:14px;text-align:left;font-size:9.9px;color:#111;">查询时间范围：</div>
<div style="left:83.7px;top:30.4px;width:140px;height:14px;line-height:14px;text-align:left;font-size:10.15px;color:#222;">(2024-06-01至2024-06-30)</div>
<div style="left:6.2px;top:52.7px;width:531px;height:38.7px;background:#dbe9f7;"></div>
<div style="left:5.7px;top:67.85px;width:35.3px;height:14px;line-height:14px;text-align:center;color:#000;font-size:10px;">行号</div>
<div style="left:36.1px;top:67.85px;width:110.6px;height:14px;line-height:14px;text-align:center;color:#000;font-size:10px;">单据编号</div>
<div style="left:146.7px;top:67.85px;width:67.8px;height:14px;line-height:14px;text-align:center;color:#000;font-size:10px;">单据日期</div>
<div style="left:214.5px;top:67.85px;width:106.4px;height:14px;line-height:14px;text-align:center;color:#000;font-size:10px;">过账时间</div>
<div style="left:320.9px;top:67.85px;width:67.2px;height:14px;line-height:14px;text-align:center;color:#000;font-size:10px;">单据类型</div>
<div style="left:388.1px;top:67.85px;width:71.1px;height:14px;line-height:14px;text-align:center;color:#000;font-size:10px;">辅助数量</div>
<div style="left:459.2px;top:67.85px;width:72.6px;height:14px;line-height:14px;text-align:center;color:#000;font-size:10px;">提成金额</div>
<div style="left:0;top:0;width:546px;height:426.8px;overflow:hidden;">
<div style="left:6.2px;top:91.4px;width:35.3px;height:18.06px;background:#eff4fa;"></div>
<div style="left:41.5px;top:91.4px;width:495.7px;height:18.06px;background:#ffffff;"></div>
<div style="left:13.5px;top:95.18px;width:30px;height:14px;line-height:14px;text-align:left;">1</div>
<div style="left:43.9px;top:95.18px;width:115px;height:14px;line-height:14px;text-align:left;">XK-T-2024-05-30-0067</div>
<div style="left:155.1px;top:95.18px;width:70px;height:14px;line-height:14px;text-align:left;">2024-06-01</div>
<div style="left:222.9px;top:95.18px;width:105px;height:14px;line-height:14px;text-align:left;">2024-06-01 10:23:52</div>
<div style="left:328.9px;top:95.18px;width:70px;height:14px;line-height:14px;text-align:left;font-size:9.9px;">销售出库单</div>
<div style="left:393.5px;top:95.18px;width:66.5px;height:14px;line-height:14px;text-align:right;">20</div>
<div style="left:464.6px;top:95.18px;width:68px;height:14px;line-height:14px;text-align:right;">6</div>
<div style="left:6.2px;top:109.16px;width:35.3px;height:18.06px;background:#e8eff8;"></div>
<div style="left:41.5px;top:109.16px;width:495.7px;height:18.06px;background:#f1f6fb;"></div>
<div style="left:13.5px;top:112.94px;width:30px;height:14px;line-height:14px;text-align:left;">2</div>
<div style="left:43.9px;top:112.94px;width:115px;height:14px;line-height:14px;text-align:left;">XK-T-2024-05-30-0067</div>
<div style="left:155.1px;top:112.94px;width:70px;height:14px;line-height:14px;text-align:left;">2024-06-01</div>
<div style="left:222.9px;top:112.94px;width:105px;height:14px;line-height:14px;text-align:left;">2024-06-01 10:23:52</div>
<div style="left:328.9px;top:112.94px;width:70px;height:14px;line-height:14px;text-align:left;font-size:9.9px;">销售出库单</div>
<div style="left:393.5px;top:112.94px;width:66.5px;height:14px;line-height:14px;text-align:right;">8</div>
<div style="left:464.6px;top:112.94px;width:68px;height:14px;line-height:14px;text-align:right;">2.4</div>
<div style="left:6.2px;top:126.92px;width:35.3px;height:18.06px;background:#eff4fa;"></div>
<div style="left:41.5px;top:126.92px;width:495.7px;height:18.06px;background:#ffffff;"></div>
<div style="left:13.5px;top:130.7px;width:30px;height:14px;line-height:14px;text-align:left;">3</div>
<div style="left:43.9px;top:130.7px;width:115px;height:14px;line-height:14px;text-align:left;">XK-T-2024-05-31-0021</div>
<div style="left:155.1px;top:130.7px;width:70px;height:14px;line-height:14px;text-align:left;">2024-06-01</div>
<div style="left:222.9px;top:130.7px;width:105px;height:14px;line-height:14px;text-align:left;">2024-06-01 15:02:56</div>
<div style="left:328.9px;top:130.7px;width:70px;height:14px;line-height:14px;text-align:left;font-size:9.9px;">销售出库单</div>
<div style="left:393.5px;top:130.7px;width:66.5px;height:14px;line-height:14px;text-align:right;">5</div>
<div style="left:464.6px;top:130.7px;width:68px;height:14px;line-height:14px;text-align:right;">2.5</div>
<div style="left:6.2px;top:144.68px;width:35.3px;height:18.06px;background:#e8eff8;"></div>
<div style="left:41.5px;top:144.68px;width:495.7px;height:18.06px;background:#f1f6fb;"></div>
<div style="left:13.5px;top:148.46px;width:30px;height:14px;line-height:14px;text-align:left;">4</div>
<div style="left:43.9px;top:148.46px;width:115px;height:14px;line-height:14px;text-align:left;">XK-T-2024-05-31-0054</div>
<div style="left:155.1px;top:148.46px;width:70px;height:14px;line-height:14px;text-align:left;">2024-06-01</div>
<div style="left:222.9px;top:148.46px;width:105px;height:14px;line-height:14px;text-align:left;">2024-06-01 09:27:59</div>
<div style="left:328.9px;top:148.46px;width:70px;height:14px;line-height:14px;text-align:left;font-size:9.9px;">销售出库单</div>
<div style="left:393.5px;top:148.46px;width:66.5px;height:14px;line-height:14px;text-align:right;">10</div>
<div style="left:464.6px;top:148.46px;width:68px;height:14px;line-height:14px;text-align:right;">3</div>
<div style="left:6.2px;top:162.44px;width:35.3px;height:18.06px;background:#a7c8ec;"></div>
<div style="left:41.5px;top:162.44px;width:495.7px;height:18.06px;background:#7eb1e4;"></div>
<div style="left:41.5px;top:162.44px;width:110.6px;height:18.06px;background:#6fa6df;"></div>
<div style="left:13.5px;top:166.22px;width:30px;height:14px;line-height:14px;text-align:left;">5</div>
<div style="left:43.9px;top:166.22px;width:115px;height:14px;line-height:14px;text-align:left;">XK-T-2024-05-31-0054</div>
<div style="left:155.1px;top:166.22px;width:70px;height:14px;line-height:14px;text-align:left;">2024-06-01</div>
<div style="left:222.9px;top:166.22px;width:105px;height:14px;line-height:14px;text-align:left;">2024-06-01 09:27:59</div>
<div style="left:328.9px;top:166.22px;width:70px;height:14px;line-height:14px;text-align:left;font-size:9.9px;">销售出库单</div>
<div style="left:393.5px;top:166.22px;width:66.5px;height:14px;line-height:14px;text-align:right;">20</div>
<div style="left:464.6px;top:166.22px;width:68px;height:14px;line-height:14px;text-align:right;">6</div>
<div style="left:6.2px;top:180.2px;width:35.3px;height:18.06px;background:#e8eff8;"></div>
<div style="left:41.5px;top:180.2px;width:495.7px;height:18.06px;background:#f1f6fb;"></div>
<div style="left:13.5px;top:183.98px;width:30px;height:14px;line-height:14px;text-align:left;">6</div>
<div style="left:43.9px;top:183.98px;width:115px;height:14px;line-height:14px;text-align:left;">XK-T-2024-05-31-0059</div>
<div style="left:155.1px;top:183.98px;width:70px;height:14px;line-height:14px;text-align:left;">2024-06-01</div>
<div style="left:222.9px;top:183.98px;width:105px;height:14px;line-height:14px;text-align:left;">2024-06-01 10:29:46</div>
<div style="left:328.9px;top:183.98px;width:70px;height:14px;line-height:14px;text-align:left;font-size:9.9px;">销售出库单</div>
<div style="left:393.5px;top:183.98px;width:66.5px;height:14px;line-height:14px;text-align:right;">1</div>
<div style="left:464.6px;top:183.98px;width:68px;height:14px;line-height:14px;text-align:right;">5</div>
<div style="left:6.2px;top:197.96px;width:35.3px;height:18.06px;background:#eff4fa;"></div>
<div style="left:41.5px;top:197.96px;width:495.7px;height:18.06px;background:#ffffff;"></div>
<div style="left:13.5px;top:201.74px;width:30px;height:14px;line-height:14px;text-align:left;">7</div>
<div style="left:43.9px;top:201.74px;width:115px;height:14px;line-height:14px;text-align:left;">XK-T-2024-05-31-0059</div>
<div style="left:155.1px;top:201.74px;width:70px;height:14px;line-height:14px;text-align:left;">2024-06-01</div>
<div style="left:222.9px;top:201.74px;width:105px;height:14px;line-height:14px;text-align:left;">2024-06-01 10:29:46</div>
<div style="left:328.9px;top:201.74px;width:70px;height:14px;line-height:14px;text-align:left;font-size:9.9px;">销售出库单</div>
<div style="left:393.5px;top:201.74px;width:66.5px;height:14px;line-height:14px;text-align:right;">0.0833</div>
<div style="left:464.6px;top:201.74px;width:68px;height:14px;line-height:14px;text-align:right;">0.4167</div>
<div style="left:6.2px;top:215.72px;width:35.3px;height:18.06px;background:#e8eff8;"></div>
<div style="left:41.5px;top:215.72px;width:495.7px;height:18.06px;background:#f1f6fb;"></div>
<div style="left:13.5px;top:219.5px;width:30px;height:14px;line-height:14px;text-align:left;">8</div>
<div style="left:43.9px;top:219.5px;width:115px;height:14px;line-height:14px;text-align:left;">XK-T-2024-05-31-0059</div>
<div style="left:155.1px;top:219.5px;width:70px;height:14px;line-height:14px;text-align:left;">2024-06-01</div>
<div style="left:222.9px;top:219.5px;width:105px;height:14px;line-height:14px;text-align:left;">2024-06-01 10:29:46</div>
<div style="left:328.9px;top:219.5px;width:70px;height:14px;line-height:14px;text-align:left;font-size:9.9px;">销售出库单</div>
<div style="left:393.5px;top:219.5px;width:66.5px;height:14px;line-height:14px;text-align:right;">2</div>
<div style="left:464.6px;top:219.5px;width:68px;height:14px;line-height:14px;text-align:right;">0.8</div>
<div style="left:6.2px;top:233.48px;width:35.3px;height:18.06px;background:#eff4fa;"></div>
<div style="left:41.5px;top:233.48px;width:495.7px;height:18.06px;background:#ffffff;"></div>
<div style="left:13.5px;top:237.26px;width:30px;height:14px;line-height:14px;text-align:left;">9</div>
<div style="left:43.9px;top:237.26px;width:115px;height:14px;line-height:14px;text-align:left;">XK-T-2024-05-31-0060</div>
<div style="left:155.1px;top:237.26px;width:70px;height:14px;line-height:14px;text-align:left;">2024-06-01</div>
<div style="left:222.9px;top:237.26px;width:105px;height:14px;line-height:14px;text-align:left;">2024-06-01 11:10:19</div>
<div style="left:328.9px;top:237.26px;width:70px;height:14px;line-height:14px;text-align:left;font-size:9.9px;">销售出库单</div>
<div style="left:393.5px;top:237.26px;width:66.5px;height:14px;line-height:14px;text-align:right;">12</div>
<div style="left:464.6px;top:237.26px;width:68px;height:14px;line-height:14px;text-align:right;">3</div>
<div style="left:6.2px;top:251.24px;width:35.3px;height:18.06px;background:#e8eff8;"></div>
<div style="left:41.5px;top:251.24px;width:495.7px;height:18.06px;background:#f1f6fb;"></div>
<div style="left:13.5px;top:255.02px;width:30px;height:14px;line-height:14px;text-align:left;">10</div>
<div style="left:43.9px;top:255.02px;width:115px;height:14px;line-height:14px;text-align:left;">XK-T-2024-05-31-0060</div>
<div style="left:155.1px;top:255.02px;width:70px;height:14px;line-height:14px;text-align:left;">2024-06-01</div>
<div style="left:222.9px;top:255.02px;width:105px;height:14px;line-height:14px;text-align:left;">2024-06-01 11:10:19</div>
<div style="left:328.9px;top:255.02px;width:70px;height:14px;line-height:14px;text-align:left;font-size:9.9px;">销售出库单</div>
<div style="left:393.5px;top:255.02px;width:66.5px;height:14px;line-height:14px;text-align:right;">3</div>
<div style="left:464.6px;top:255.02px;width:68px;height:14px;line-height:14px;text-align:right;">0.75</div>
<div style="left:6.2px;top:269px;width:35.3px;height:18.06px;background:#eff4fa;"></div>
<div style="left:41.5px;top:269px;width:495.7px;height:18.06px;background:#ffffff;"></div>
<div style="left:13.5px;top:272.78px;width:30px;height:14px;line-height:14px;text-align:left;">11</div>
<div style="left:43.9px;top:272.78px;width:115px;height:14px;line-height:14px;text-align:left;">XK-T-2024-05-31-0074</div>
<div style="left:155.1px;top:272.78px;width:70px;height:14px;line-height:14px;text-align:left;">2024-06-01</div>
<div style="left:222.9px;top:272.78px;width:105px;height:14px;line-height:14px;text-align:left;">2024-06-01 17:16:29</div>
<div style="left:328.9px;top:272.78px;width:70px;height:14px;line-height:14px;text-align:left;font-size:9.9px;">销售出库单</div>
<div style="left:393.5px;top:272.78px;width:66.5px;height:14px;line-height:14px;text-align:right;">10</div>
<div style="left:464.6px;top:272.78px;width:68px;height:14px;line-height:14px;text-align:right;">3</div>
<div style="left:6.2px;top:286.76px;width:35.3px;height:18.06px;background:#e8eff8;"></div>
<div style="left:41.5px;top:286.76px;width:495.7px;height:18.06px;background:#f1f6fb;"></div>
<div style="left:13.5px;top:290.54px;width:30px;height:14px;line-height:14px;text-align:left;">12</div>
<div style="left:43.9px;top:290.54px;width:115px;height:14px;line-height:14px;text-align:left;">XK-T-2024-05-31-0074</div>
<div style="left:155.1px;top:290.54px;width:70px;height:14px;line-height:14px;text-align:left;">2024-06-01</div>
<div style="left:222.9px;top:290.54px;width:105px;height:14px;line-height:14px;text-align:left;">2024-06-01 17:16:29</div>
<div style="left:328.9px;top:290.54px;width:70px;height:14px;line-height:14px;text-align:left;font-size:9.9px;">销售出库单</div>
<div style="left:393.5px;top:290.54px;width:66.5px;height:14px;line-height:14px;text-align:right;">4</div>
<div style="left:464.6px;top:290.54px;width:68px;height:14px;line-height:14px;text-align:right;">1.2</div>
<div style="left:6.2px;top:304.52px;width:35.3px;height:18.06px;background:#eff4fa;"></div>
<div style="left:41.5px;top:304.52px;width:495.7px;height:18.06px;background:#ffffff;"></div>
<div style="left:13.5px;top:308.3px;width:30px;height:14px;line-height:14px;text-align:left;">13</div>
<div style="left:43.9px;top:308.3px;width:115px;height:14px;line-height:14px;text-align:left;">XK-T-2024-05-31-0082</div>
<div style="left:155.1px;top:308.3px;width:70px;height:14px;line-height:14px;text-align:left;">2024-06-01</div>
<div style="left:222.9px;top:308.3px;width:105px;height:14px;line-height:14px;text-align:left;">2024-06-01 09:31:18</div>
<div style="left:328.9px;top:308.3px;width:70px;height:14px;line-height:14px;text-align:left;font-size:9.9px;">销售出库单</div>
<div style="left:393.5px;top:308.3px;width:66.5px;height:14px;line-height:14px;text-align:right;">2</div>
<div style="left:464.6px;top:308.3px;width:68px;height:14px;line-height:14px;text-align:right;">1</div>
<div style="left:6.2px;top:322.28px;width:35.3px;height:18.06px;background:#dbe8f5;"></div>
<div style="left:41.5px;top:322.28px;width:495.7px;height:18.06px;background:#e6eff9;"></div>
<div style="left:13.5px;top:326.06px;width:30px;height:14px;line-height:14px;text-align:left;">14</div>
<div style="left:43.9px;top:326.06px;width:115px;height:14px;line-height:14px;text-align:left;">XK-T-2024-05-31-0087</div>
<div style="left:155.1px;top:326.06px;width:70px;height:14px;line-height:14px;text-align:left;">2024-06-01</div>
<div style="left:222.9px;top:326.06px;width:105px;height:14px;line-height:14px;text-align:left;">2024-06-01 12:05:49</div>
<div style="left:328.9px;top:326.06px;width:70px;height:14px;line-height:14px;text-align:left;font-size:9.9px;">销售出库单</div>
<div style="left:393.5px;top:326.06px;width:66.5px;height:14px;line-height:14px;text-align:right;">30</div>
<div style="left:464.6px;top:326.06px;width:68px;height:14px;line-height:14px;text-align:right;">15</div>
<div style="left:6.2px;top:340.04px;width:35.3px;height:18.06px;background:#eff4fa;"></div>
<div style="left:41.5px;top:340.04px;width:495.7px;height:18.06px;background:#ffffff;"></div>
<div style="left:13.5px;top:343.82px;width:30px;height:14px;line-height:14px;text-align:left;">15</div>
<div style="left:43.9px;top:343.82px;width:115px;height:14px;line-height:14px;text-align:left;">XK-T-2024-05-31-0087</div>
<div style="left:155.1px;top:343.82px;width:70px;height:14px;line-height:14px;text-align:left;">2024-06-01</div>
<div style="left:222.9px;top:343.82px;width:105px;height:14px;line-height:14px;text-align:left;">2024-06-01 12:05:49</div>
<div style="left:328.9px;top:343.82px;width:70px;height:14px;line-height:14px;text-align:left;font-size:9.9px;">销售出库单</div>
<div style="left:393.5px;top:343.82px;width:66.5px;height:14px;line-height:14px;text-align:right;">5</div>
<div style="left:464.6px;top:343.82px;width:68px;height:14px;line-height:14px;text-align:right;">2.5</div>
<div style="left:6.2px;top:357.8px;width:35.3px;height:18.06px;background:#e8eff8;"></div>
<div style="left:41.5px;top:357.8px;width:495.7px;height:18.06px;background:#f1f6fb;"></div>
<div style="left:13.5px;top:361.58px;width:30px;height:14px;line-height:14px;text-align:left;">16</div>
<div style="left:43.9px;top:361.58px;width:115px;height:14px;line-height:14px;text-align:left;">XK-T-2024-05-31-0087</div>
<div style="left:155.1px;top:361.58px;width:70px;height:14px;line-height:14px;text-align:left;">2024-06-01</div>
<div style="left:222.9px;top:361.58px;width:105px;height:14px;line-height:14px;text-align:left;">2024-06-01 12:05:49</div>
<div style="left:328.9px;top:361.58px;width:70px;height:14px;line-height:14px;text-align:left;font-size:9.9px;">销售出库单</div>
<div style="left:393.5px;top:361.58px;width:66.5px;height:14px;line-height:14px;text-align:right;">6</div>
<div style="left:464.6px;top:361.58px;width:68px;height:14px;line-height:14px;text-align:right;">3</div>
<div style="left:6.2px;top:375.56px;width:35.3px;height:18.06px;background:#eff4fa;"></div>
<div style="left:41.5px;top:375.56px;width:495.7px;height:18.06px;background:#ffffff;"></div>
<div style="left:13.5px;top:379.34px;width:30px;height:14px;line-height:14px;text-align:left;">17</div>
<div style="left:43.9px;top:379.34px;width:115px;height:14px;line-height:14px;text-align:left;">XK-T-2024-05-31-0087</div>
<div style="left:155.1px;top:379.34px;width:70px;height:14px;line-height:14px;text-align:left;">2024-06-01</div>
<div style="left:222.9px;top:379.34px;width:105px;height:14px;line-height:14px;text-align:left;">2024-06-01 12:05:49</div>
<div style="left:328.9px;top:379.34px;width:70px;height:14px;line-height:14px;text-align:left;font-size:9.9px;">销售出库单</div>
<div style="left:393.5px;top:379.34px;width:66.5px;height:14px;line-height:14px;text-align:right;">1</div>
<div style="left:464.6px;top:379.34px;width:68px;height:14px;line-height:14px;text-align:right;">0.5</div>
<div style="left:6.2px;top:393.32px;width:35.3px;height:18.06px;background:#e8eff8;"></div>
<div style="left:41.5px;top:393.32px;width:495.7px;height:18.06px;background:#f1f6fb;"></div>
<div style="left:13.5px;top:397.1px;width:30px;height:14px;line-height:14px;text-align:left;">18</div>
<div style="left:43.9px;top:397.1px;width:115px;height:14px;line-height:14px;text-align:left;">XK-T-2024-05-31-0090</div>
<div style="left:155.1px;top:397.1px;width:70px;height:14px;line-height:14px;text-align:left;">2024-06-01</div>
<div style="left:222.9px;top:397.1px;width:105px;height:14px;line-height:14px;text-align:left;">2024-06-01 17:25:22</div>
<div style="left:328.9px;top:397.1px;width:70px;height:14px;line-height:14px;text-align:left;font-size:9.9px;">销售出库单</div>
<div style="left:393.5px;top:397.1px;width:66.5px;height:14px;line-height:14px;text-align:right;">20</div>
<div style="left:464.6px;top:397.1px;width:68px;height:14px;line-height:14px;text-align:right;">6</div>
<div style="left:6.2px;top:411.08px;width:35.3px;height:18.06px;background:#eff4fa;"></div>
<div style="left:41.5px;top:411.08px;width:495.7px;height:18.06px;background:#ffffff;"></div>
<div style="left:13.5px;top:414.86px;width:30px;height:14px;line-height:14px;text-align:left;">19</div>
<div style="left:43.9px;top:414.86px;width:115px;height:14px;line-height:14px;text-align:left;">XK-T-2024-05-31-0090</div>
<div style="left:155.1px;top:414.86px;width:70px;height:14px;line-height:14px;text-align:left;">2024-06-01</div>
<div style="left:222.9px;top:414.86px;width:105px;height:14px;line-height:14px;text-align:left;">2024-06-01 17:25:22</div>
<div style="left:328.9px;top:414.86px;width:70px;height:14px;line-height:14px;text-align:left;font-size:9.9px;">销售出库单</div>
<div style="left:393.5px;top:414.86px;width:66.5px;height:14px;line-height:14px;text-align:right;">8</div>
<div style="left:464.6px;top:414.86px;width:68px;height:14px;line-height:14px;text-align:right;">2.4</div>
<div class="rhl" style="left:6.2px;top:90.9px;width:531px;height:1px;"></div>
<div class="rhl" style="left:6.2px;top:108.66px;width:531px;height:1px;"></div>
<div class="rhl" style="left:6.2px;top:126.42px;width:531px;height:1px;"></div>
<div class="rhl" style="left:6.2px;top:144.18px;width:531px;height:1px;"></div>
<div class="rhl" style="left:6.2px;top:161.94px;width:531px;height:1px;"></div>
<div class="rhl" style="left:6.2px;top:179.7px;width:531px;height:1px;"></div>
<div class="rhl" style="left:6.2px;top:197.46px;width:531px;height:1px;"></div>
<div class="rhl" style="left:6.2px;top:215.22px;width:531px;height:1px;"></div>
<div class="rhl" style="left:6.2px;top:232.98px;width:531px;height:1px;"></div>
<div class="rhl" style="left:6.2px;top:250.74px;width:531px;height:1px;"></div>
<div class="rhl" style="left:6.2px;top:268.5px;width:531px;height:1px;"></div>
<div class="rhl" style="left:6.2px;top:286.26px;width:531px;height:1px;"></div>
<div class="rhl" style="left:6.2px;top:304.02px;width:531px;height:1px;"></div>
<div class="rhl" style="left:6.2px;top:321.78px;width:531px;height:1px;"></div>
<div class="rhl" style="left:6.2px;top:339.54px;width:531px;height:1px;"></div>
<div class="rhl" style="left:6.2px;top:357.3px;width:531px;height:1px;"></div>
<div class="rhl" style="left:6.2px;top:375.06px;width:531px;height:1px;"></div>
<div class="rhl" style="left:6.2px;top:392.82px;width:531px;height:1px;"></div>
<div class="rhl" style="left:6.2px;top:410.58px;width:531px;height:1px;"></div>
<div class="rhl" style="left:6.2px;top:428.34px;width:531px;height:1px;"></div>
<div class="rvl" style="left:41px;top:52.7px;width:1px;height:400px;"></div>
<div class="rvl" style="left:151.6px;top:52.7px;width:1px;height:400px;"></div>
<div class="rvl" style="left:219.4px;top:52.7px;width:1px;height:400px;"></div>
<div class="rvl" style="left:325.8px;top:52.7px;width:1px;height:400px;"></div>
<div class="rvl" style="left:393px;top:52.7px;width:1px;height:400px;"></div>
<div class="rvl" style="left:464.1px;top:52.7px;width:1px;height:400px;"></div>
<div class="rvl" style="left:536.7px;top:52.7px;width:1px;height:400px;"></div>
<div style="left:5.7px;top:52.7px;width:1px;height:400px;background:#dfe9f4;width:1px;"></div>
</div>
</div>
</body></html>
